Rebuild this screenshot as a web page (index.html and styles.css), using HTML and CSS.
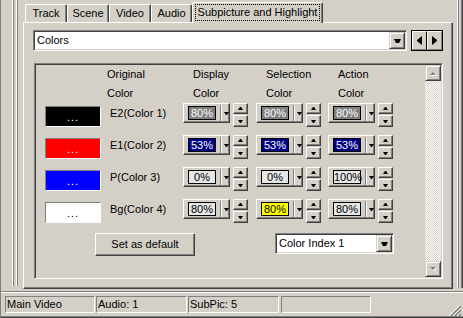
FILE: index.html
```html
<!doctype html>
<html lang="en">
<head>
  <meta charset="UTF-8">
  <title>Subpicture and Highlight</title>
  <link rel="stylesheet" href="styles.css">
</head>
<body>
  <div class="window">
    <div class="main">
      <div class="dock"><div class="dock-lines"></div></div>
      <div class="tabctl">
        <div class="tabstrip">
          <div class="tab w42">Track</div>
          <div class="tab w42">Scene</div>
          <div class="tab w42">Video</div>
          <div class="tab w41">Audio</div>
          <div class="tab active"><span class="focus">Subpicture and Highlight</span></div>
        </div>
        <div class="panel">
          <div class="toprow">
            <div class="combo wide">
              <span class="combo-text">Colors</span>
              <span class="combo-btn"><i class="arrow-dn"></i></span>
            </div>
            <div class="nav">
              <span class="nav-btn left"><i class="arrow-l"></i></span>
              <span class="nav-btn right"><i class="arrow-r"></i></span>
            </div>
          </div>

          <div class="group">
            <div class="gbody">
              <div class="grid">
                <div></div>
                <div class="hd">Original</div>
                <div class="hd pad">Display</div>
                <div class="hd pad">Selection</div>
                <div class="hd pad">Action</div>

                <div></div>
                <div class="hd">Color</div>
                <div class="hd pad">Color</div>
                <div class="hd pad">Color</div>
                <div class="hd pad">Color</div>

                <!-- row 1 -->
                <div class="swatch c-black">...</div>
                <div class="lbl">E2(Color 1)</div>
                <div class="pctctl"><div class="pct"><span class="val v-gray">80%</span><i class="sep"></i><i class="drop"></i></div><div class="spin"><b class="sbtn"><i class="arrow-up"></i></b><b class="sbtn"><i class="arrow-dn"></i></b></div></div>
                <div class="pctctl"><div class="pct"><span class="val v-gray">80%</span><i class="sep"></i><i class="drop"></i></div><div class="spin"><b class="sbtn"><i class="arrow-up"></i></b><b class="sbtn"><i class="arrow-dn"></i></b></div></div>
                <div class="pctctl"><div class="pct"><span class="val v-gray">80%</span><i class="sep"></i><i class="drop"></i></div><div class="spin"><b class="sbtn"><i class="arrow-up"></i></b><b class="sbtn"><i class="arrow-dn"></i></b></div></div>

                <!-- row 2 -->
                <div class="swatch c-red">...</div>
                <div class="lbl">E1(Color 2)</div>
                <div class="pctctl"><div class="pct"><span class="val v-navy">53%</span><i class="sep"></i><i class="drop"></i></div><div class="spin"><b class="sbtn"><i class="arrow-up"></i></b><b class="sbtn"><i class="arrow-dn"></i></b></div></div>
                <div class="pctctl"><div class="pct"><span class="val v-navy">53%</span><i class="sep"></i><i class="drop"></i></div><div class="spin"><b class="sbtn"><i class="arrow-up"></i></b><b class="sbtn"><i class="arrow-dn"></i></b></div></div>
                <div class="pctctl"><div class="pct"><span class="val v-navy">53%</span><i class="sep"></i><i class="drop"></i></div><div class="spin"><b class="sbtn"><i class="arrow-up"></i></b><b class="sbtn"><i class="arrow-dn"></i></b></div></div>

                <!-- row 3 -->
                <div class="swatch c-blue">...</div>
                <div class="lbl">P(Color 3)</div>
                <div class="pctctl"><div class="pct"><span class="val v-light">0%</span><i class="sep"></i><i class="drop"></i></div><div class="spin"><b class="sbtn"><i class="arrow-up"></i></b><b class="sbtn"><i class="arrow-dn"></i></b></div></div>
                <div class="pctctl"><div class="pct"><span class="val v-light">0%</span><i class="sep"></i><i class="drop"></i></div><div class="spin"><b class="sbtn"><i class="arrow-up"></i></b><b class="sbtn"><i class="arrow-dn"></i></b></div></div>
                <div class="pctctl"><div class="pct"><span class="val v-light">100%</span><i class="sep"></i><i class="drop"></i></div><div class="spin"><b class="sbtn"><i class="arrow-up"></i></b><b class="sbtn"><i class="arrow-dn"></i></b></div></div>

                <!-- row 4 -->
                <div class="swatch c-white">...</div>
                <div class="lbl">Bg(Color 4)</div>
                <div class="pctctl"><div class="pct"><span class="val v-light">80%</span><i class="sep"></i><i class="drop"></i></div><div class="spin"><b class="sbtn"><i class="arrow-up"></i></b><b class="sbtn"><i class="arrow-dn"></i></b></div></div>
                <div class="pctctl"><div class="pct"><span class="val v-yellow">80%</span><i class="sep"></i><i class="drop"></i></div><div class="spin"><b class="sbtn"><i class="arrow-up"></i></b><b class="sbtn"><i class="arrow-dn"></i></b></div></div>
                <div class="pctctl"><div class="pct"><span class="val v-light">80%</span><i class="sep"></i><i class="drop"></i></div><div class="spin"><b class="sbtn"><i class="arrow-up"></i></b><b class="sbtn"><i class="arrow-dn"></i></b></div></div>
              </div>

              <div class="actions">
                <div class="btn">Set as default</div>
                <div class="combo small">
                  <span class="combo-text">Color Index 1</span>
                  <span class="combo-btn"><i class="arrow-dn"></i></span>
                </div>
              </div>
            </div>

            <div class="vscroll">
              <span class="sb-btn">
                <svg width="7" height="5" viewBox="0 0 7 5"><polygon points="4,2 7,5 1,5" fill="#fff"/><polygon points="3,1 6,4 0,4" fill="#808080"/></svg>
              </span>
              <span class="sb-track"></span>
              <span class="sb-btn">
                <svg width="7" height="5" viewBox="0 0 7 5"><polygon points="1,1 7,1 4,4" fill="#fff"/><polygon points="0,0 6,0 3,3" fill="#808080"/></svg>
              </span>
            </div>
          </div>
        </div>
      </div>
      <div class="right-edge"></div>
    </div>

    <div class="status">
      <div class="pane w90">Main Video</div>
      <div class="pane w91">Audio: 1</div>
      <div class="pane w91 gap">SubPic: 5</div>
      <div class="pane w90">&nbsp;</div>
      <svg class="grip" width="12" height="12" viewBox="0 0 12 12">
        <path d="M11 0L0 11M11 4L4 11M11 8L8 11" stroke="#fff" stroke-width="1"/>
        <path d="M12 1L1 12M12 5L5 12M12 9L9 12" stroke="#808080" stroke-width="1.5"/>
      </svg>
    </div>
  </div>
</body>
</html>
```
FILE: styles.css
```css
*{margin:0;
  padding:0;
  box-sizing:border-box;}
body{font:11px "Liberation Sans", Arial, sans-serif;
     color:#000;
     background:#d4d0c8;}

.window{width:463px;
        height:318px;
        border-left:1px solid #808080;
        display:flex;
        flex-direction:column;
        overflow:hidden;}
.main{height:291px;
      display:flex;}

/* left dock handle */
.dock{width:22px;}
.dock-lines{height:286px;
            background:linear-gradient(to right, transparent 11px, #fff 11px 12px, #808080 12px 13px, transparent 13px 15px, #fff 15px 16px, #808080 16px 17px, transparent 17px);}

.right-edge{width:10px;
            height:288px;
            background:linear-gradient(to right, transparent 4px, #fff 4px 5px, #808080 5px 6px, transparent 6px 8px, #808080 8px 9px, #404040 9px);}

/* tabs */
.tabctl{width:430px;
        display:flex;
        flex-direction:column;}
.tabstrip{height:22px;
          display:flex;
          align-items:flex-end;
          padding-left:2px;}
.tab{height:18px;
     border-top:1px solid #fff;
     border-left:1px solid #fff;
     border-right:1px solid #404040;
     box-shadow:inset -1px 0 #808080;
     border-radius:2px 2px 0 0;
     text-align:center;
     line-height:17px;
     white-space:nowrap;}
.tab.w42{width:42px;}
.tab.w41{width:41px;}
.tab.active{width:131px;
            height:21px;
            margin-bottom:-1px;
            padding:1px 2px 0;
            background:#d4d0c8;
            position:relative;
            z-index:1;}
.tab .focus{display:block;
            height:17px;
            border:1px dotted #000;
            line-height:15px;}

.panel{height:267px;
       border-top:1px solid #fff;
       border-left:1px solid #fff;
       border-right:1px solid #404040;
       border-bottom:1px solid #404040;
       box-shadow:inset -1px -1px #808080;
       padding:7px 0 0 9px;}

/* combo boxes */
.toprow{display:flex;
        height:21px;}
.combo{display:flex;
       align-items:center;
       background:#fff;
       border:1px solid;
       border-color:#808080 #fff #fff #808080;
       box-shadow:inset 1px 1px #404040, inset -1px -1px #d4d0c8;
       padding:1px;}
.combo.wide{width:374px;
            height:21px;}
.combo.small{width:119px;
             height:21px;
             margin-left:80px;}
.combo-text{flex:1;
            padding-left:2px;
            line-height:17px;}
.combo-btn{width:16px;
           height:17px;
           display:flex;
           align-items:center;
           justify-content:center;
           background:#d4d0c8;
           border:1px solid;
           border-color:#d4d0c8 #404040 #404040 #d4d0c8;
           box-shadow:inset 1px 1px #fff, inset -1px -1px #808080;}

.arrow-dn{display:block;
          width:1px;
          height:0;
          border-top:3px solid #000;
          border-left:2px solid transparent;
          border-right:2px solid transparent;
          box-sizing:content-box;}
.arrow-up{display:block;
          width:1px;
          height:0;
          border-bottom:3px solid #000;
          border-left:2px solid transparent;
          border-right:2px solid transparent;
          box-sizing:content-box;}
.combo-btn .arrow-dn{width:3px;
                     border-top-width:4px;}

.nav{display:flex;
     width:32px;
     margin-left:4px;
     border:1px solid #000;}
.nav-btn{width:15px;
         display:flex;
         align-items:center;
         justify-content:center;
         border-top:1px solid #fff;
         border-left:1px solid #fff;
         border-bottom:1px solid #808080;}
.nav-btn.left{border-right:1px solid #000;}
.nav-btn.right{width:15px;
               border-right:1px solid #808080;}
.arrow-l{display:block;
         width:0;
         height:1px;
         border-right:5px solid #000;
         border-top:4px solid transparent;
         border-bottom:4px solid transparent;
         box-sizing:content-box;}
.arrow-r{display:block;
         width:0;
         height:1px;
         border-left:5px solid #000;
         border-top:4px solid transparent;
         border-bottom:4px solid transparent;
         box-sizing:content-box;}

/* sunken group with scroll */
.group{display:flex;
       width:409px;
       height:216px;
       margin:12px 0 0 1px;
       border:1px solid;
       border-color:#808080 #fff #fff #808080;
       box-shadow:inset 1px 1px #404040, inset -1px -1px #d4d0c8;
       padding:1px;}
.gbody{flex:1;
       padding-left:9px;}
.grid{display:grid;
      grid-template-columns:62px 76px 73px 72px 1fr;
      grid-template-rows:19px 19px repeat(4, 32px);}
.hd{line-height:19px;
    white-space:nowrap;}
.hd.pad{padding-left:10px;}
.lbl{padding:3px 0 0 3px;
     line-height:14px;
     white-space:nowrap;}

.swatch{width:56px;
        height:21px;
        margin-top:3px;
        border:1px solid;
        border-color:#808080 #fff #fff #808080;
        text-align:center;
        line-height:21px;
        color:#fff;
        letter-spacing:1px;}
.c-black{background:#000;}
.c-red{background:#f00;}
.c-blue{background:#00f;}
.c-white{background:#fff;
         color:#000;}

.pctctl{display:flex;
        align-items:flex-start;}
.pct{width:47px;
     height:20px;
     display:flex;
     align-items:center;
     padding-left:4px;
     border:1px solid;
     border-color:#fff #404040 #404040 #fff;
     box-shadow:inset -1px -1px #808080;}
.val{width:28px;
     height:14px;
     border:1px solid #000;
     font-size:11px;
     line-height:12px;
     text-align:center;
     white-space:nowrap;}
.v-gray{background:#808080;
        color:#fff;}
.v-navy{background:#000080;
        color:#fff;}
.v-light{background:#e6e6e6;}
.v-yellow{background:#ff0;}
.sep{width:2px;
     height:16px;
     margin-left:4px;
     border-left:1px solid #808080;
     border-right:1px solid #fff;}
.drop{display:block;
      width:1px;
      height:0;
      margin-left:2px;
      border-top:3px solid #000;
      border-left:2px solid transparent;
      border-right:2px solid transparent;
      box-sizing:content-box;}

.spin{display:flex;
      flex-direction:column;
      gap:1px;
      margin-left:3px;}
.sbtn{width:15px;
      height:11px;
      display:flex;
      align-items:center;
      justify-content:center;
      border:1px solid;
      border-color:#fff #404040 #404040 #fff;
      box-shadow:inset -1px -1px #808080;}
.sbtn + .sbtn{height:12px;}

.actions{display:flex;
         align-items:flex-start;
         margin-top:2px;}
.btn{width:100px;
     height:23px;
     margin-left:50px;
     border:1px solid;
     border-color:#fff #404040 #404040 #fff;
     box-shadow:inset -1px -1px #808080;
     text-align:center;
     line-height:20px;}

.vscroll{width:16px;
         display:flex;
         flex-direction:column;}
.sb-btn{height:16px;
        display:flex;
        align-items:center;
        justify-content:center;
        border:1px solid;
        border-color:#d4d0c8 #404040 #404040 #d4d0c8;
        box-shadow:inset 1px 1px #fff, inset -1px -1px #808080;}
.sb-track{flex:1;
          background:repeating-conic-gradient(#fff 0 25%, #d4d0c8 0 50%) 0 0/2px 2px;}

/* status bar */
.status{flex:1;
        display:flex;
        align-items:flex-start;
        padding:4px 0 0 4px;
        border-top:1px solid #808080;
        box-shadow:inset 0 1px #fff, inset 0 -1px #404040, inset 0 -2px #808080;}
.pane{height:17px;
      margin-right:1px;
      padding-left:1px;
      border:1px solid;
      border-color:#808080 #fff #fff #808080;
      line-height:15px;
      white-space:nowrap;}
.pane.w90{width:90px;}
.pane.w91{width:91px;}
.pane.gap{margin-right:2px;}
.grip{margin:9px 2px 0 auto;}
```
